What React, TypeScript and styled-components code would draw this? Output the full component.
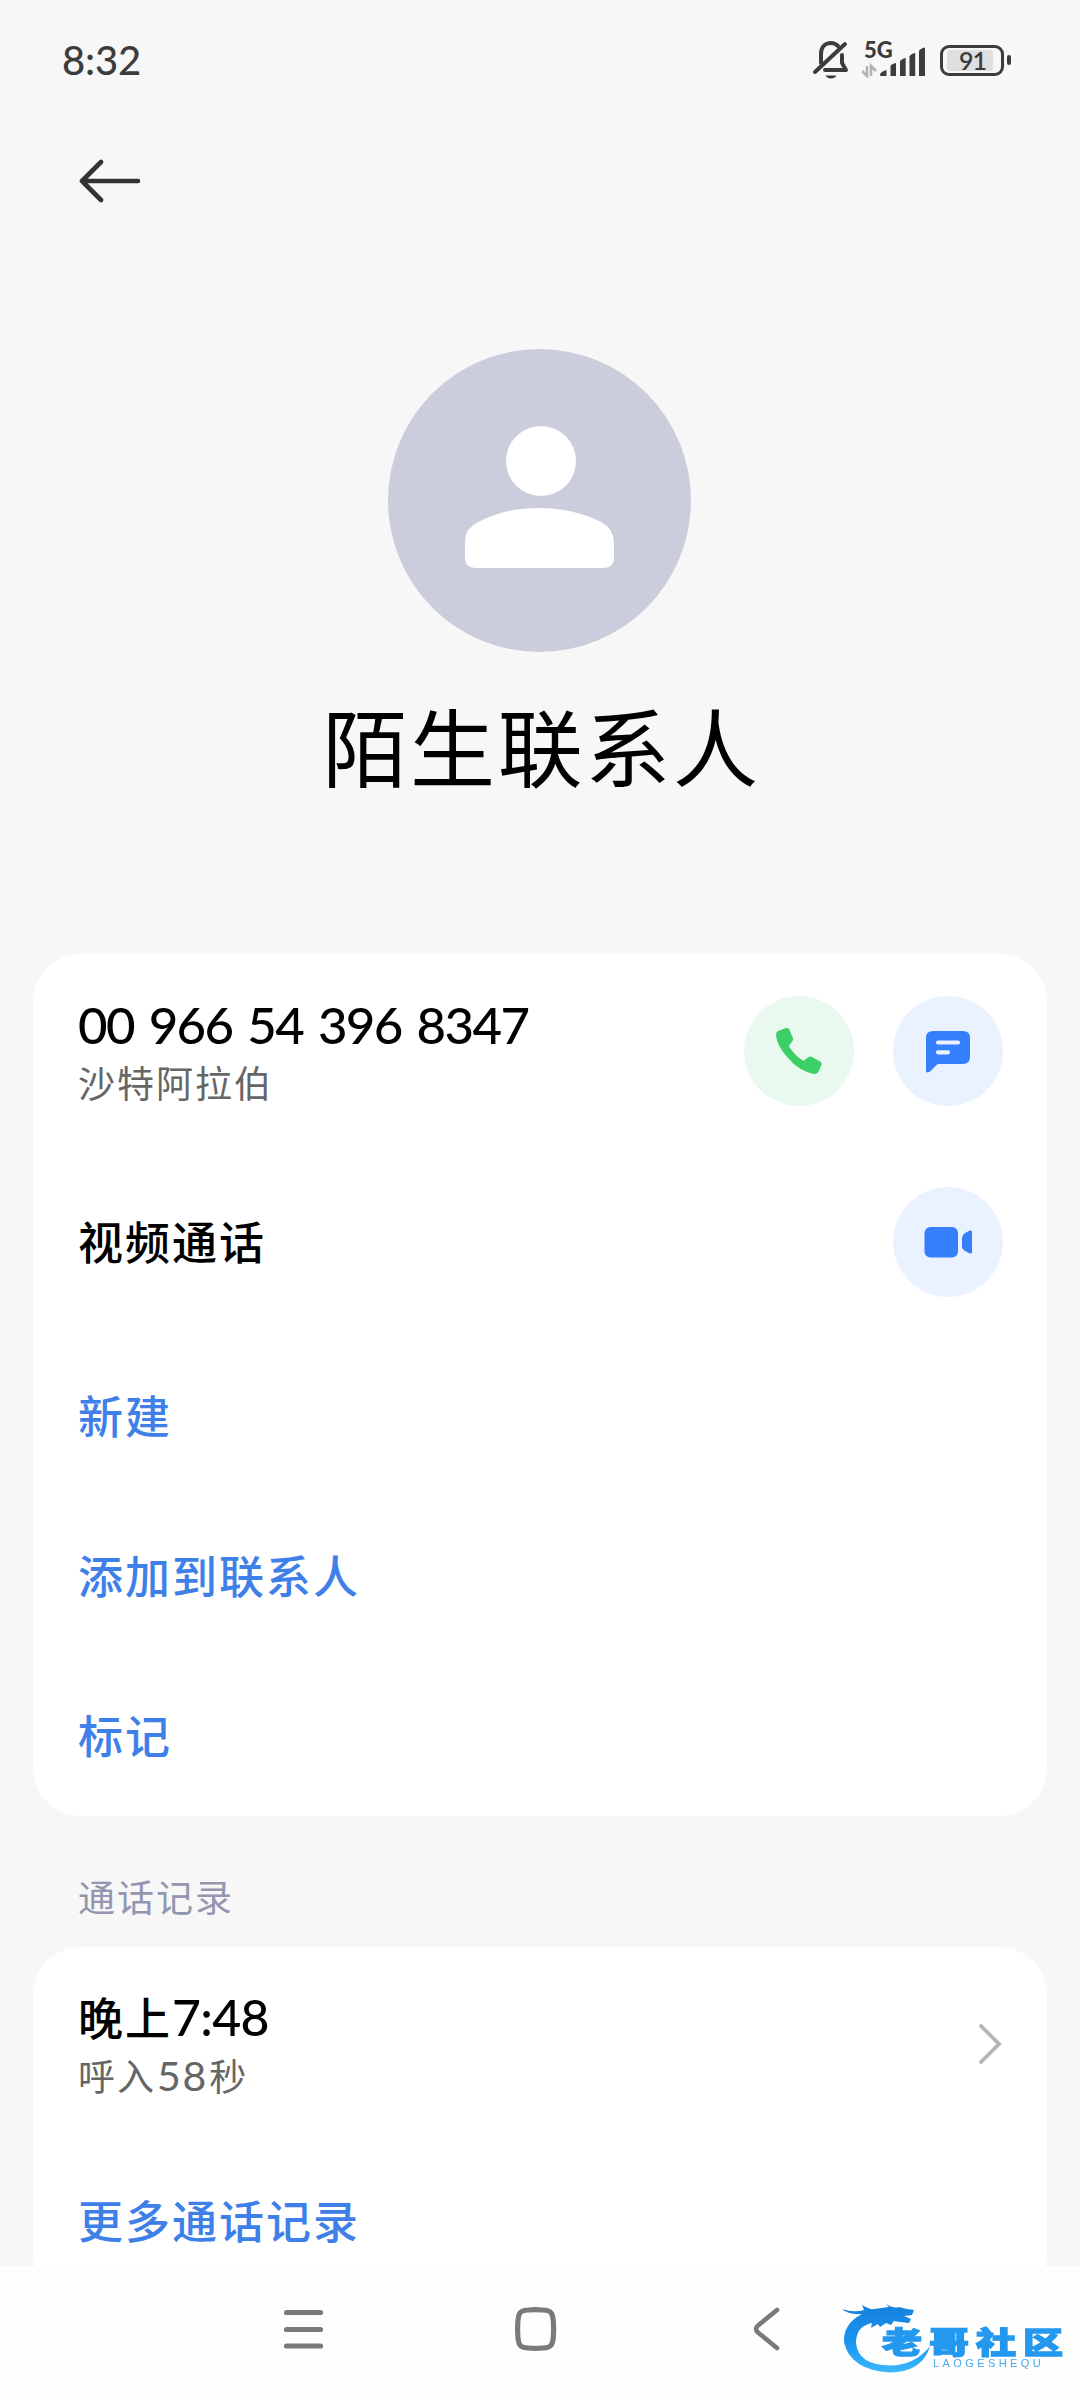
import React from 'react';
import styled, { createGlobalStyle } from 'styled-components';

const GlobalStyle = createGlobalStyle`
  html, body { margin: 0; padding: 0; background: #f7f7f7; }
  * { box-sizing: border-box; }
`;

const latin = `Lato, 'Noto Sans CJK SC', sans-serif`;
const cjk = `'Noto Sans CJK SC', sans-serif`;

const Screen = styled.div`
  width: 1080px;
  height: 2400px;
  display: flex;
  flex-direction: column;
  background: #f7f7f7;
  font-family: ${cjk};
  overflow: hidden;
`;

const Content = styled.main`
  height: 2266px;
  overflow: hidden;
  display: flex;
  flex-direction: column;
`;

const StatusBar = styled.header`
  height: 120px;
  flex: none;
  display: flex;
  align-items: center;
  justify-content: space-between;
  padding: 0 69px 0 62px;
`;

const Clock = styled.span`
  font: 500 40px/48px ${latin};
  letter-spacing: -0.2px;
  color: #3c3c3c;
`;

const StatusIcons = styled.div`
  display: flex;
  align-items: center;
  height: 60px;
`;

const Signal = styled.div`
  display: flex;
  flex-direction: column;
  margin-left: 12px;
  width: 64px;
  height: 36px;
  position: relative;
`;

const NetworkLabel = styled.span`
  position: absolute;
  left: 2px;
  top: -3px;
  font: 900 22px/22px ${latin};
  color: #3c3c3c;
`;

const Battery = styled.div`
  width: 64px;
  height: 31px;
  margin-left: 14px;
  border: 3.5px solid #3c3c3c;
  border-radius: 9px;
  padding: 2px 8px 2px 4px;
  display: flex;
`;

const BatteryLevel = styled.div`
  flex: 1;
  background: #dfdfdf;
  border-radius: 3px;
  display: flex;
  align-items: center;
  justify-content: center;
  font: 600 25px/20px ${latin};
  letter-spacing: -1px;
  padding-left: 5px;
  color: #3c3c3c;
`;

const BatteryTip = styled.div`
  width: 4px;
  height: 10px;
  border-radius: 2px;
  margin-left: 3px;
  background: #3c3c3c;
`;

const ActionBar = styled.nav`
  height: 124px;
  flex: none;
  padding: 37px 0 0 77px;
`;

const Profile = styled.section`
  height: 710px;
  flex: none;
  display: flex;
  flex-direction: column;
  align-items: center;
  padding-top: 105px;
`;

const Avatar = styled.div`
  width: 303px;
  height: 303px;
  border-radius: 50%;
  background: #cccddc;
  margin-right: 1px;
`;

const Name = styled.h1`
  margin: 27px 0 0 3px;
  font: 400 85px/130px ${cjk};
  letter-spacing: 2.6px;
  color: #000;
`;

const Card = styled.section`
  flex: none;
  margin: 0 33px;
  background: #fff;
  border-radius: 48px;
`;

const Row = styled.div<{ $h: number }>`
  height: ${p => p.$h}px;
  display: flex;
  align-items: center;
  justify-content: space-between;
  padding: 0 44px 0 45px;
`;

const TextBlock = styled.div`
  display: flex;
  flex-direction: column;
`;

const PhoneNumber = styled.span`
  padding-top: 3px;
  font: 500 51px/58px ${latin};
  letter-spacing: -1.6px;
  word-spacing: 3.4px;
  color: #000;
`;

const Primary = styled.span`
  margin-bottom: 3px;
  font: 500 45px/60px ${cjk};
  letter-spacing: 2px;
  color: #000;
`;

const CallTime = styled(Primary)`
  padding-top: 2px;
  margin-bottom: 0;
`;

const Digits = styled.span`
  font: 500 50px/58px ${latin};
  letter-spacing: -0.7px;
`;

const Secondary = styled.span`
  font: 400 37px/56px ${cjk};
  letter-spacing: 2px;
  color: #666;
`;

const Duration = styled.span`
  font: 400 41px/56px ${latin};
  letter-spacing: 1.8px;
  margin: 0 1px;
`;

const ActionLink = styled.a`
  margin-bottom: 3px;
  font: 500 45px/60px ${cjk};
  letter-spacing: 2px;
  color: #3f80e8;
`;

const Actions = styled.div`
  display: flex;
  gap: 39px;
`;

const RoundButton = styled.button<{ $tone: 'green' | 'blue' }>`
  width: 110px;
  height: 110px;
  padding: 0;
  border: 0;
  border-radius: 50%;
  background: ${p => (p.$tone === 'green' ? '#e9f9ef' : '#eaf2ff')};
  svg { display: block; }
`;

const SectionTitle = styled.h2`
  flex: none;
  height: 131px;
  margin: 0;
  padding: 52px 0 0 78px;
  font: 400 37px/56px ${cjk};
  letter-spacing: 2px;
  color: #9396ae;
`;

const NavBar = styled.footer`
  height: 134px;
  flex: none;
  background: #fefefe;
  display: flex;
  align-items: flex-start;
  padding-left: 283px;
`;

const NavIcon = styled.svg`
  width: 42px;
  height: 44px;
  margin: 41px 190px 0 0;
  flex: none;
`;

const Watermark = styled.div`
  position: relative;
  width: 232px;
  height: 86px;
  margin: 34px 0 0 -139px;
  flex: none;
  filter: blur(0.6px);
`;

const MarkName = styled.span`
  position: absolute;
  left: 42px;
  top: 20px;
  font: 900 40px/40px ${cjk};
  letter-spacing: 7px;
  white-space: nowrap;
  transform: scaleY(0.74);
  color: #2398ee;
  -webkit-text-stroke: 1.8px #2398ee;
`;

const MarkLatin = styled.span`
  position: absolute;
  left: 93px;
  top: 57px;
  font: 400 11px/12px 'Liberation Sans', sans-serif;
  letter-spacing: 3.4px;
  color: #45a9f0;
`;

const MutedBell = () => (
  <svg width="38" height="40" viewBox="0 0 38 40" fill="none" stroke="#3c3c3c" strokeWidth="4" strokeLinecap="round" strokeLinejoin="round">
    <path d="M9 23V14C9 7 13 3 19 3c3 0 5 1 7 3" />
    <path d="M30 15v8l4 7H13" />
    <path d="M3 32 33 4" />
    <path d="M13.500 35.500h11c-1 2-3 3-5.500 3s-4.500-1-5.500-3z" fill="#3c3c3c" stroke="none" />
  </svg>
);

const SignalBars = () => (
  <svg width="64" height="36" viewBox="0 0 64 36">
    <g fill="#3c3c3c">
      <path d="M18 33q0-3 6.500-5v6h-5.500q-1 0-1-1z" />
      <path d="M28.500 24q1-2 5.500-3V34h-5.500z" />
      <path d="M38 19.500q1-2.500 5.700-3.500V34H38z" />
      <path d="M47.500 14.500q1-2.500 5.700-3.500V34h-5.700z" />
      <path d="M57 9q1-2.500 6-3.500V34h-6z" />
    </g>
    <path d="M5 24v10L0 29M9 34V24l5 5" stroke="#b2b2b2" strokeWidth="2.600" fill="none" />
  </svg>
);

const BackArrow = () => (
  <svg width="64" height="46" viewBox="0 0 64 46" fill="none" stroke="#333" strokeWidth="4.600" strokeLinecap="round" strokeLinejoin="round">
    <path d="M24 5 5 24l19 19M5 24h56" />
  </svg>
);

const Person = () => (
  <svg width="303" height="303" viewBox="0 0 303 303" fill="#fff">
    <circle cx="153" cy="112" r="35" />
    <path d="M77 191q1-12 13-18 27-14 61-14t62 14q12 6 13 20v15q0 11-11 11H88q-11 0-11-11z" />
  </svg>
);

const Phone = () => (
  <svg width="110" height="110" viewBox="0 0 110 110" fill="#3bcf65">
    <path d="M34 35 42 32q2-.5 3 1l4 9q.5 2-.5 3l-3.500 4.500q0 1 .7 2Q51.500 60 58 64q1 1 2 .5l4.500-3.500q1.300-1 3-.2l9 5q1.600 1.200 1 3l-2.800 6.500Q73.500 78.500 70 78 55 75 44 62 33 50 32 39q0-3 2-4z" />
  </svg>
);

const Message = () => (
  <svg width="110" height="110" viewBox="0 0 110 110">
    <path d="M33 42q0-7 7-7h30q7 0 7 7v19q0 7-7 7H46q-1.500 0-2.500 1l-6.500 6.500q-4 2.500-4-1z" fill="#367ffc" />
    <path d="M45 46.500h20M45 56.300h10" stroke="#eaf2ff" strokeWidth="4.200" strokeLinecap="round" />
  </svg>
);

const Video = () => (
  <svg width="110" height="110" viewBox="0 0 110 110" fill="#367ffc">
    <rect x="31.500" y="40" width="33.500" height="30.500" rx="6" />
    <path d="M69 51q0-3 3-5l5-2.500q2-.5 2 1.500v20q0 2-2 1.500l-5-2.500q-3-2-3-4z" />
  </svg>
);

const Chevron = () => (
  <svg width="24" height="42" viewBox="0 0 24 42" fill="none" stroke="#b5b5b5" strokeWidth="3.800" strokeLinecap="round">
    <path d="M2 3l18 18L2 39" />
  </svg>
);

const Dragon = () => (
  <svg width="100" height="80" viewBox="0 0 100 80">
    <defs>
      <linearGradient id="dragon" x1="0" y1="0" x2="0" y2="1">
        <stop offset="0" stopColor="#1580dc" />
        <stop offset=".6" stopColor="#1a96f3" />
        <stop offset="1" stopColor="#3cb9fb" />
      </linearGradient>
    </defs>
    <path fill="url(#dragon)" d="M2 9q12 4 22 1l-2-5q8 5 12 4l15-2-3-3q8 5 13 3l8 2 7 1-2 5-8 1 7 3-2 4-9-1-6-1-3 4-5-2-6 4-2-3-7 4 1-5Q16 26 16 43q2 22 34 22.500 24 0 40-19Q82 72 50 72.500 10 70 4 42 3 24 22 14 8 15 2 9z" />
  </svg>
);

export default function App() {
  return (
    <Screen>
      <GlobalStyle />
      <Content>
        <StatusBar>
          <Clock>8:32</Clock>
          <StatusIcons>
            <MutedBell />
            <Signal>
              <SignalBars />
              <NetworkLabel>5G</NetworkLabel>
            </Signal>
            <Battery><BatteryLevel>91</BatteryLevel></Battery>
            <BatteryTip />
          </StatusIcons>
        </StatusBar>
        <ActionBar><BackArrow /></ActionBar>
        <Profile>
          <Avatar><Person /></Avatar>
          <Name>陌生联系人</Name>
        </Profile>
        <Card>
          <Row $h={194}>
            <TextBlock>
              <PhoneNumber>00 966 54 396 8347</PhoneNumber>
              <Secondary>沙特阿拉伯</Secondary>
            </TextBlock>
            <Actions>
              <RoundButton $tone="green"><Phone /></RoundButton>
              <RoundButton $tone="blue"><Message /></RoundButton>
            </Actions>
          </Row>
          <Row $h={188}>
            <Primary>视频通话</Primary>
            <RoundButton $tone="blue"><Video /></RoundButton>
          </Row>
          <Row $h={160}><ActionLink>新建</ActionLink></Row>
          <Row $h={160}><ActionLink>添加到联系人</ActionLink></Row>
          <Row $h={160}><ActionLink>标记</ActionLink></Row>
        </Card>
        <SectionTitle>通话记录</SectionTitle>
        <Card>
          <Row $h={194}>
            <TextBlock>
              <CallTime>晚上<Digits>7:48</Digits></CallTime>
              <Secondary>呼入<Duration>58</Duration>秒</Secondary>
            </TextBlock>
            <Chevron />
          </Row>
          <Row $h={160}><ActionLink>更多通话记录</ActionLink></Row>
        </Card>
      </Content>
      <NavBar>
        <NavIcon viewBox="0 0 42 44" stroke="#7a7a7a" strokeWidth="5.200" strokeLinecap="round">
          <path d="M3.500 5.500h34M3.500 22.500h34M3.500 39h34" />
        </NavIcon>
        <NavIcon viewBox="0 0 42 44" fill="none" stroke="#7a7a7a" strokeWidth="5.200">
          <path d="M2.600 22Q2.600 10 4.600 6.500T13.600 3q7-.6 14 0 7 0 9 3.500T38.600 22q0 12-2 15.500T27.600 41q-7 .6-14 0-7 0-9-3.500T2.600 22z" />
        </NavIcon>
        <NavIcon viewBox="0 0 42 44" fill="none" stroke="#7a7a7a" strokeWidth="4.600" strokeLinecap="round" strokeLinejoin="round">
          <path d="M30 3 11 18.500q-4 3.500 0 7L30 41" />
        </NavIcon>
        <Watermark>
          <Dragon />
          <MarkName>老哥社区</MarkName>
          <MarkLatin>LAOGESHEQU</MarkLatin>
        </Watermark>
      </NavBar>
    </Screen>
  );
}
